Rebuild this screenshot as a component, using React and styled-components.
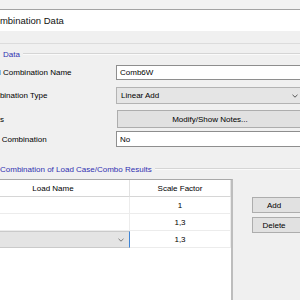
import React from "react";
import styled, { createGlobalStyle } from "styled-components";

const GlobalStyle = createGlobalStyle`
  html, body { margin: 0; padding: 0; overflow: hidden; background: #f0f0f0; }
  body { font-family: "Liberation Sans", Arial, sans-serif; font-size: 8px; color: #000; }
`;

const Page = styled.div`
  width: 300px;
  height: 300px;
  overflow: hidden;
  display: flex;
  flex-direction: column;
`;

const TopStrip = styled.div`
  height: 9px;
  background: #f2f2f2;
  border-bottom: 1px solid #a3a3a3;
`;

const TitleBar = styled.div`
  height: 21px;
  background: #fff;
  display: flex;
  align-items: center;
`;

const Title = styled.span`
  margin-left: -36px;
  font-size: 9.5px;
  white-space: nowrap;
  color: #111;
`;

const Body = styled.div`
  flex: 1;
  background: #f0f0f0;
  padding-top: 12px;
  display: flex;
  flex-direction: column;
  min-height: 0;
`;

const FrameLine = styled.div`
  border-top: 1px solid #dcdcdc;
`;

const GroupHeader = styled.div`
  display: flex;
  align-items: center;
  gap: 3px;
  height: 12px;
  margin-top: ${(p) => p.$top}px;
`;

const Legend = styled.span`
  color: #3030b0;
  white-space: nowrap;
  padding-left: ${(p) => p.$indent}px;
`;

const Rule = styled.div`
  flex: 1;
  border-top: 1px solid #d5d5d5;
  border-bottom: 1px solid #fafafa;
`;

const FieldRow = styled.div`
  display: grid;
  grid-template-columns: 133px 187px;
  align-items: center;
  margin-left: -17px;
  margin-top: ${(p) => p.$top}px;
  height: ${(p) => p.$h}px;
`;

const Label = styled.span`
  white-space: nowrap;
`;

const TextBox = styled.div`
  height: 100%;
  box-sizing: border-box;
  background: #fff;
  border: 1px solid #8e8e8e;
  padding: 0 3px;
  display: flex;
  align-items: center;
`;

const Combo = styled.div`
  height: 100%;
  box-sizing: border-box;
  background: #e5e5e5;
  border: 1px solid #b3b3b3;
  padding: 0 4px;
  display: flex;
  align-items: center;
  justify-content: space-between;
`;

const PushButton = styled.div`
  height: ${(p) => (p.$h ? `${p.$h}px` : "100%")};
  width: ${(p) => (p.$w ? `${p.$w}px` : "auto")};
  box-sizing: border-box;
  background: #e1e1e1;
  border: 1px solid #adadad;
  display: flex;
  align-items: center;
  justify-content: center;
  padding-right: ${(p) => p.$shift || 0}px;
  margin-left: ${(p) => p.$ml || 0}px;
  white-space: nowrap;
`;

const GridArea = styled.div`
  flex: 1;
  display: flex;
  align-items: flex-start;
  margin-top: 4px;
  min-height: 0;
`;

const DataGrid = styled.div`
  margin-left: -23px;
  width: 256px;
  flex-shrink: 0;
  align-self: stretch;
  box-sizing: border-box;
  background: #fff;
  border-top: 1px solid #a9a9a9;
  border-right: 2px solid #bdbdbd;
  display: grid;
  grid-template-columns: 153px 1fr;
  grid-auto-rows: 17px;
  align-content: start;
`;

const HeaderCell = styled.div`
  display: flex;
  align-items: center;
  justify-content: center;
  border-bottom: 1px solid #d6d6d6;
  border-right: 1px solid #e2e2e2;
  white-space: nowrap;
`;

const Cell = styled.div`
  display: flex;
  align-items: center;
  justify-content: center;
  border-bottom: 1px solid #ececec;
  border-right: 1px solid #ececec;
`;

const ComboCell = styled.div`
  display: flex;
  align-items: center;
  justify-content: flex-end;
  padding-right: 5px;
  background: #e4e4e4;
  border: 1px solid #cacaca;
  border-right: 1px solid #3d84d6;
`;

const SideButtons = styled.div`
  display: flex;
  flex-direction: column;
  gap: 4px;
  margin-left: 19px;
  margin-top: 18px;
`;

const Chevron = ({ color = "#555" }) => (
  <svg width="6" height="4" viewBox="0 0 6 4">
    <path d="M0.5 0.8 L3 3.2 L5.5 0.8" fill="none" stroke={color} strokeWidth="1" />
  </svg>
);

export default function App() {
  return (
    <>
      <GlobalStyle />
      <Page>
        <TopStrip />
        <TitleBar>
          <Title>Load Combination Data</Title>
        </TitleBar>
        <Body>
          <FrameLine />
          <GroupHeader $top={4}>
            <Legend $indent={3}>Data</Legend>
            <Rule />
          </GroupHeader>
          <FieldRow $top={5} $h={15}>
            <Label>Load Combination Name</Label>
            <TextBox>Comb6W</TextBox>
          </FieldRow>
          <FieldRow $top={7} $h={17}>
            <Label>Combination Type</Label>
            <Combo>
              <span>Linear Add</span>
              <Chevron />
            </Combo>
          </FieldRow>
          <FieldRow $top={6} $h={18}>
            <Label>Notes</Label>
            <PushButton $ml={1}>Modify/Show Notes...</PushButton>
          </FieldRow>
          <FieldRow $top={3} $h={16}>
            <Label>Auto Combination</Label>
            <TextBox>No</TextBox>
          </FieldRow>
          <GroupHeader $top={16}>
            <Legend $indent={0}>Combination of Load Case/Combo Results</Legend>
            <Rule />
          </GroupHeader>
          <GridArea>
            <DataGrid>
              <HeaderCell>Load Name</HeaderCell>
              <HeaderCell>Scale Factor</HeaderCell>
              <Cell />
              <Cell>1</Cell>
              <Cell />
              <Cell>1,3</Cell>
              <ComboCell>
                <Chevron color="#777" />
              </ComboCell>
              <Cell>1,3</Cell>
            </DataGrid>
            <SideButtons>
              <PushButton $h={16} $w={54} $shift={10}>Add</PushButton>
              <PushButton $h={16} $w={54} $shift={10}>Delete</PushButton>
            </SideButtons>
          </GridArea>
        </Body>
      </Page>
    </>
  );
}
